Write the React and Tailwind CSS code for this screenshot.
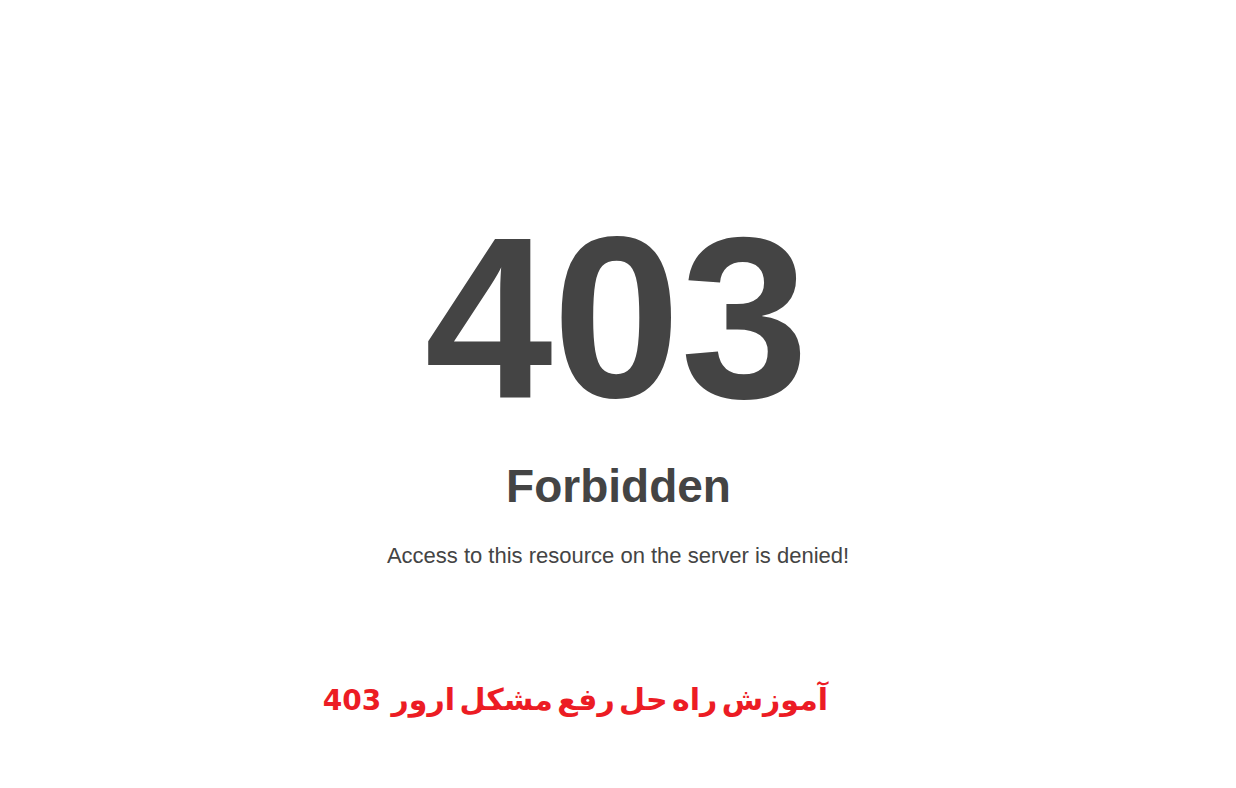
export default function App() {
  return (
    <div className="w-[1236px] h-[788px] bg-white overflow-hidden" style={{ fontFamily: '"Liberation Sans", Arial, sans-serif' }}>
      <div className="flex flex-col items-center">
        <div className="mt-[203px] text-[230px] leading-none font-bold text-[#444444] pr-[3px]">403</div>
        <div className="mt-[30px] text-[46px] leading-none font-bold text-[#444444] pl-[1px]">Forbidden</div>
        <div className="mt-[36px] text-[22px] leading-none text-[#444444]">Access to this resource on the server is denied!</div>
      </div>
      <div className="mt-[118px] flex">
        <div
          dir="rtl"
          className="ml-[320px] w-[508px] text-[30px] leading-none font-bold text-[#ec1c24] whitespace-nowrap"
          style={{ fontFamily: '"DejaVu Sans", sans-serif' }}
        >
          <span className="[word-spacing:-6px]">آموزش راه حل رفع مشکل ارور</span>{" "}
          <span className="text-[28px]">403</span>
        </div>
      </div>
    </div>
  );
}
